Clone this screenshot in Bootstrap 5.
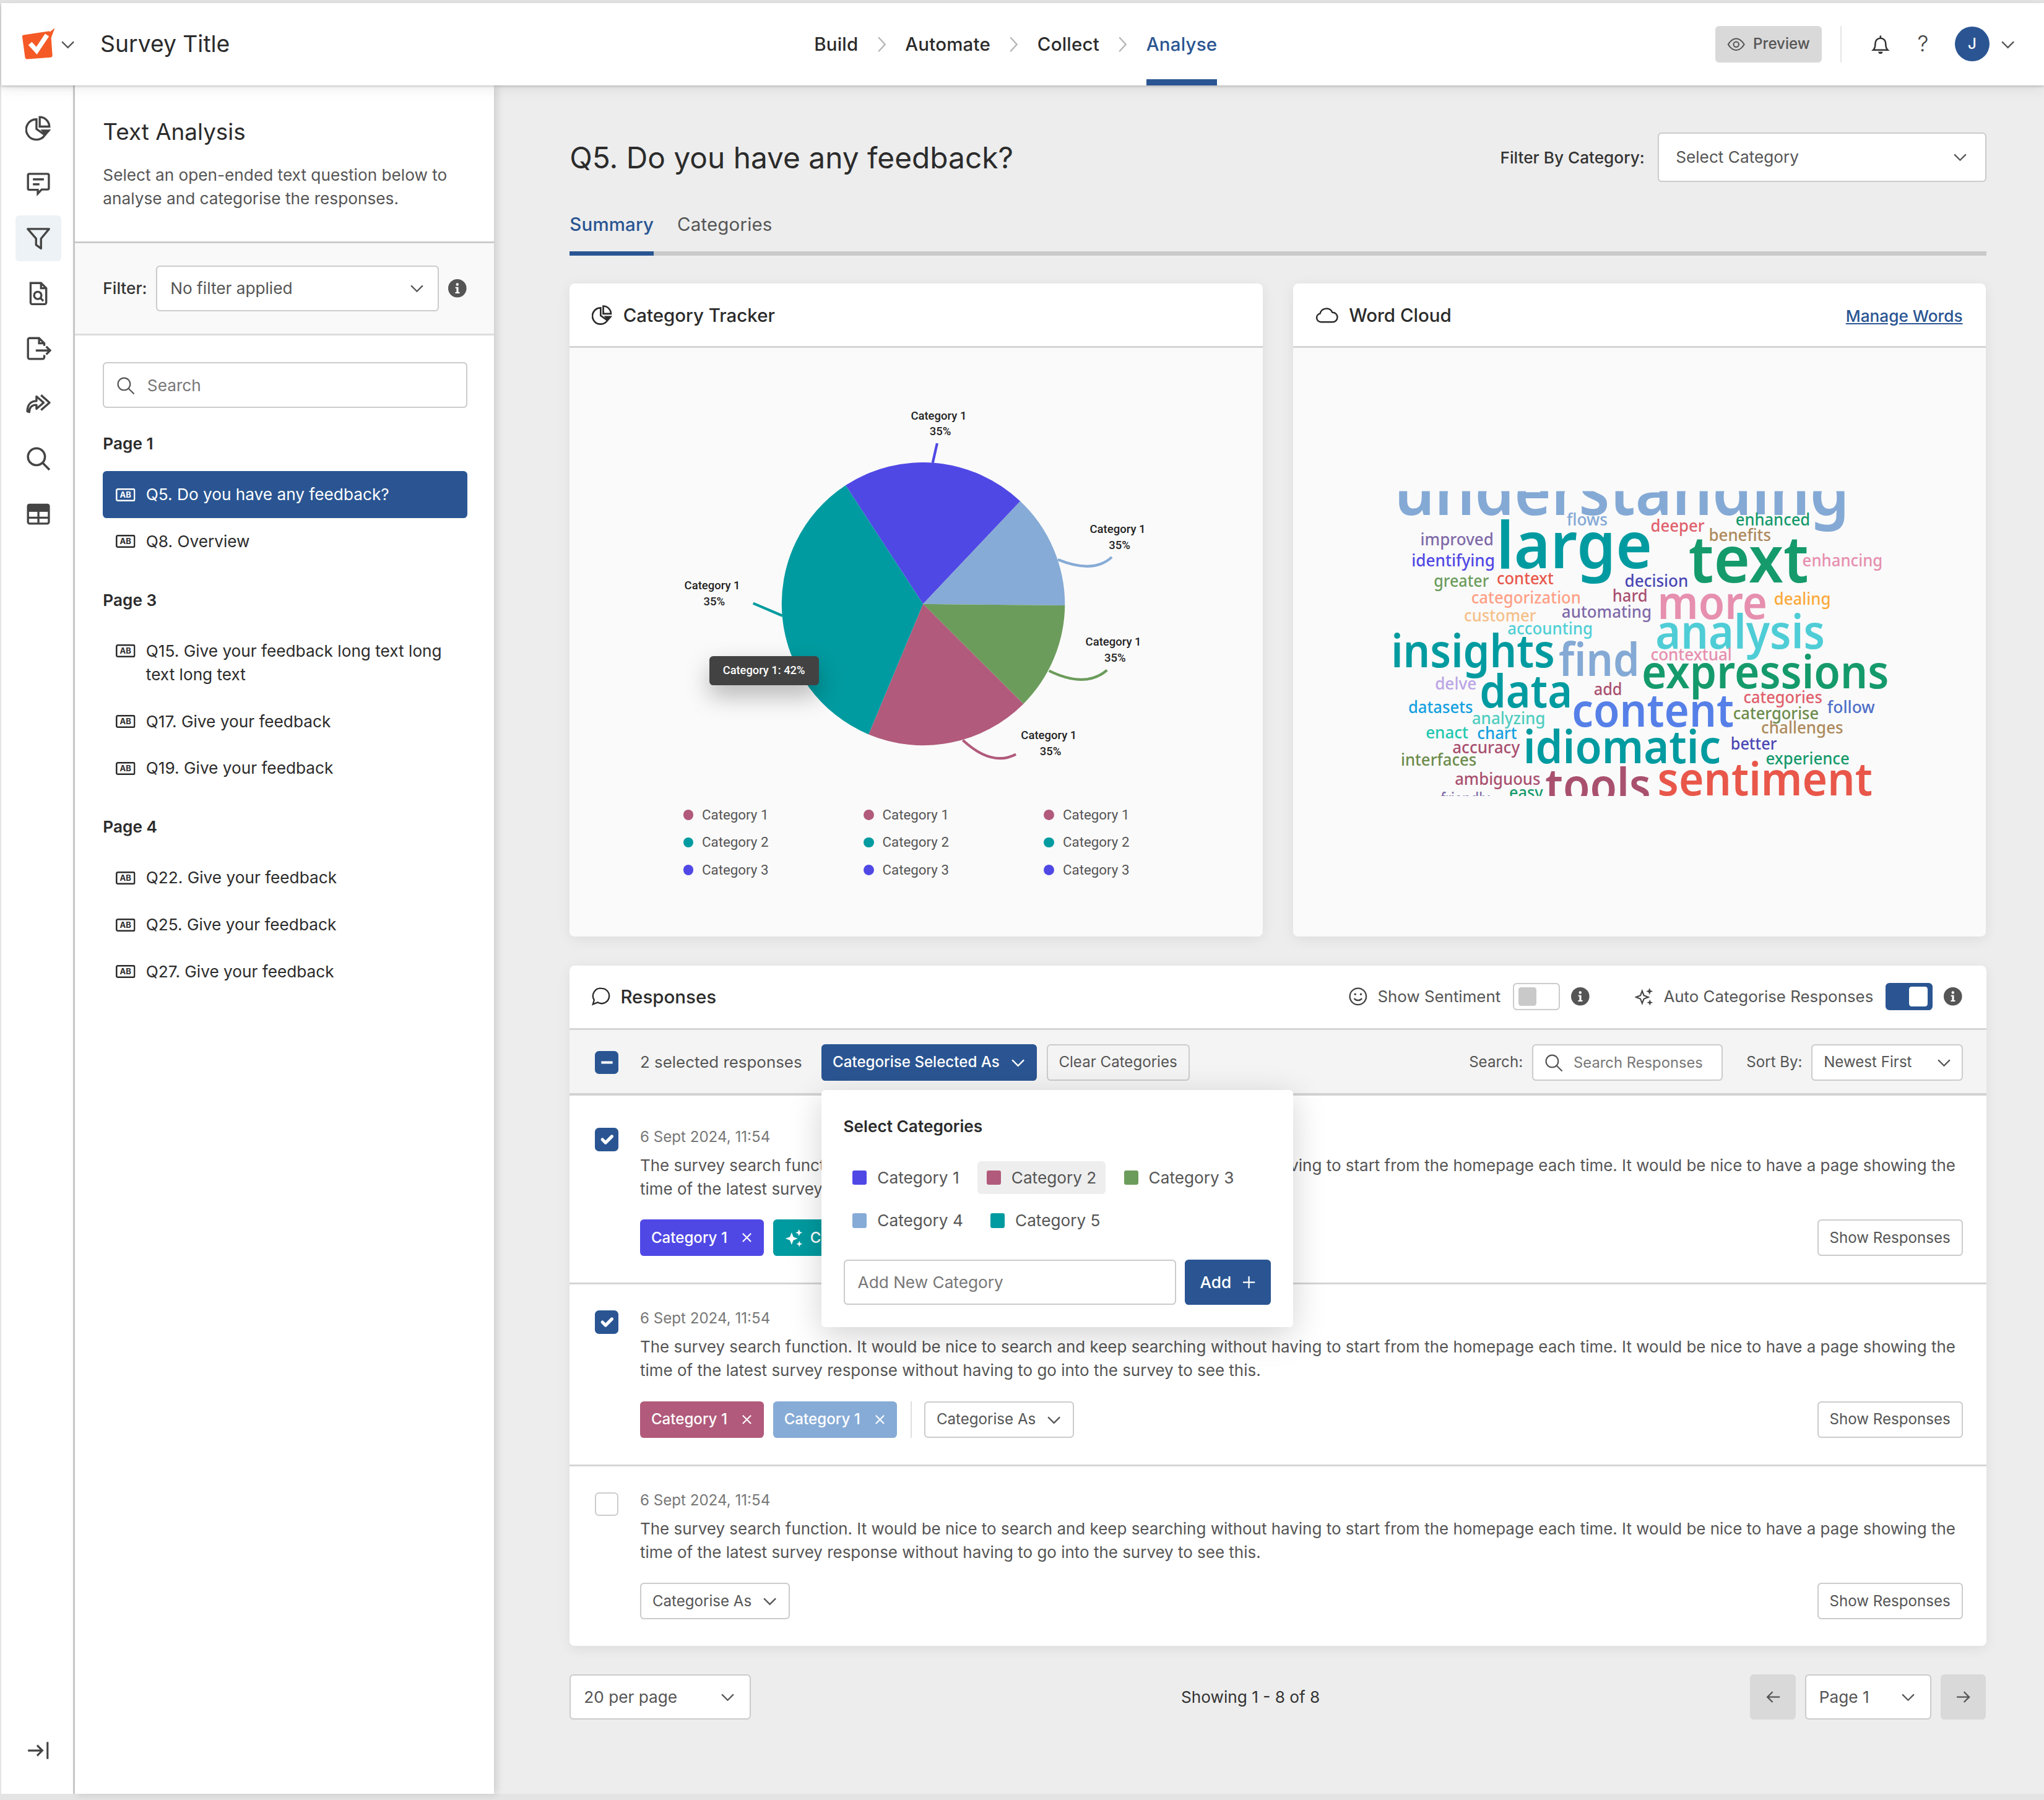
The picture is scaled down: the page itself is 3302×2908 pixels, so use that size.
<!DOCTYPE html>
<html lang="en">
<head>
<meta charset="utf-8">
<title>Survey Title - Text Analysis</title>
<link rel="stylesheet" href="https://cdn.jsdelivr.net/npm/bootstrap@5.3.0/dist/css/bootstrap.min.css">
<style>
html{background:#e4e4e4;overflow:hidden}
body{zoom:2.106;background:#e4e4e4;font-family:Inter,"Liberation Sans",sans-serif;color:#2b2b2b;font-size:12.45px;overflow:hidden}
.app-shell{width:1568px;height:1381px;padding:2.4px 0 5px 1px}
.top-bar{height:63px;background:#fff;box-shadow:0 1px 2px rgba(0,0,0,.22),0 3px 10px rgba(0,0,0,.07);z-index:5;position:relative}
.brand-area{width:623.5px;padding-left:16px}
.brand-title{font-size:17.7px;margin-left:19px}
.step-link{font-size:14px;font-weight:500;letter-spacing:.1px;color:#2b2b2b;text-decoration:none;height:63px;line-height:63px;border-bottom:5px solid transparent;display:block}
.step-link.on{color:#2a5592;border-bottom-color:#2a5592}
.step-sep{width:36px;display:flex;justify-content:center;color:#b5b5b5}
.bar-right{margin-left:auto;padding-right:22px}
.preview-btn{height:28px;width:82px;background:#d9d9d9;border:0;border-radius:3px;font-size:11.45px;font-weight:500;color:#555;padding:0;gap:6px}
.bar-rule{width:1px;height:28px;background:#e6e6e6;margin:0 14px}
.avatar-dot{width:26.5px;height:26.5px;border-radius:50%;background:#2a5592;color:#fff;font-size:11.45px;font-weight:500}
.help-mark{font-size:17px;font-weight:300;color:#444;width:33px;text-align:center;line-height:1}
.body-row{height:1310.6px;min-height:0}
.icon-rail{width:56.5px;background:#fff;border-right:1.5px solid #ccc;padding:15.2px 0 15.5px;box-shadow:inset 0 6px 6px -6px rgba(0,0,0,.1)}
.rail-slot{width:35px;height:35px;border-radius:3px;margin:0 9px 7.3px 11px;color:#444}
.rail-slot.on{background:#edf2f6}
.side-panel{width:321.5px;background:#fff;box-shadow:2px 0 6px rgba(0,0,0,.14);z-index:3}
.panel-head{padding:23.7px 20.5px 23.5px 21.5px;border-bottom:1.5px solid #ccc}
.panel-title{font-size:17.5px;line-height:24px;margin:0 0 12.5px;font-weight:400}
.panel-copy{line-height:18px;color:#555;margin:0}
.filter-band{height:71px;background:#f9f9f9;border-bottom:1.5px solid #ddd;padding:0 20.5px 0 21.5px;gap:7px}
.strong-label{font-weight:500;color:#333;margin:0}
.fld{height:35px;font-size:12.45px;color:#555;border:1px solid #ccc;border-radius:3px;padding:0 28px 0 10px;background-color:#fff;box-shadow:none;
 background-image:url("data:image/svg+xml,%3csvg xmlns='http://www.w3.org/2000/svg' viewBox='0 0 12 12'%3e%3cpath fill='none' stroke='%23555' stroke-width='1.1' d='M1.5 4l4.5 4.5L10.5 4'/%3e%3c/svg%3e");background-size:12px 12px;background-position:right 11px center}
.fld-filter{background-position:right 9.5px center}
.fld-sm{height:28px;font-size:11.45px;padding-left:8.5px}
.fld-wide{width:252px;height:38px;padding-left:13px;background-position:right 13px center}
.fld-sort{width:116px;background-position:right 7.5px center}
.fld-perpage{width:139px}
.fld-page{width:97px}
.search-shell{height:35px;border:1px solid #ccc;border-radius:3px;background:#fff;padding-left:9px;gap:9px;color:#555}
.search-shell input{border:0;outline:0;padding:0;min-width:0;flex:1;font-size:12.45px;background:transparent}
.search-shell input::placeholder,.plain-input::placeholder{color:#777;opacity:1}
.panel-list{padding:20.5px 20.5px 0 21.5px}
.group-label{font-weight:600;line-height:18px;margin:18px 0 12px;color:#2b2b2b}
.group-label.lead-group{margin-top:18.5px}
.q-item{padding:9px 10px 9px 10px;line-height:18px;color:#2b2b2b;gap:8px;border-radius:3px;text-decoration:none}
.q-item svg{flex:none;margin-top:4px}
.q-item.on{background:#2a5592;color:#fff}
.main-area{padding:36px 44.5px 0 58px;background:#ededed;min-width:0}
.page-title{font-size:22.7px;line-height:39px;font-weight:400;margin:0 0 -1px}
.head-filter{margin-right:10px;margin-top:1px}
.tab-strip{margin-top:22.3px;border-bottom:3.4px solid #c9c9c9;gap:18px}
.tab-link{font-size:14px;line-height:20px;padding-bottom:11px;margin-bottom:-3.4px;border-bottom:3.4px solid transparent;color:#555;text-decoration:none;letter-spacing:.08px}
.tab-link.on{font-weight:500;color:#2a5592;border-bottom-color:#2a5592}
.top-cards{--bs-gutter-x:23px;margin-top:21.6px}
.soft-card{border:0;border-radius:4px;box-shadow:0 2px 10px rgba(0,0,0,.07);overflow:visible}
.soft-head{height:49.5px;background:#fff;border-bottom:1.5px solid #d5d5d5;padding:0 18px 0 17px;font-size:14px;font-weight:500;gap:8px;border-radius:4px 4px 0 0}
.resp-head{padding-left:16px;gap:7px}
.viz-body{height:451.5px;background:#fafafa;padding:0;border-radius:0 0 4px 4px}
.manage-link{font-size:12.45px;font-weight:500;color:#2a5592;margin:2px 0 0 auto}
.chart-canvas{display:block;width:532px;height:347.5px}
.chart-label{font-family:Roboto,sans-serif;font-size:8.8px;font-weight:500;fill:#222;text-anchor:middle}
.tip-box{top:236.5px;left:107px;width:84px;height:22px;background:#424242;color:#fff;border-radius:3px;font:500 8.7px/22px Roboto,sans-serif;text-align:center;box-shadow:0 8px 18px rgba(0,0,0,.28)}
.legend-grid{display:grid;grid-template-columns:repeat(3,138.4px);margin-left:87px;font-family:Roboto,sans-serif;font-size:10.6px;color:#555;line-height:21px}
.legend-dot{width:8px;height:8px;border-radius:50%;margin-right:6.5px;display:inline-block;vertical-align:-0.5px}
.cloud-canvas{display:block;width:532px;height:451.5px}
.cloud-canvas text{font-family:"Noto Sans",sans-serif;font-weight:500}
.cloud-canvas text.hv{font-weight:600}
.bg-c1{background:#5048e5}.bg-c2{background:#b15a7b}.bg-c3{background:#6c9c5c}.bg-c4{background:#86abd6}.bg-c5{background:#009ba0}
.resp-card{margin-top:22px}
.opt-strip{font-size:12.3px;font-weight:400}
.opt-label{color:#555;margin:0}
.gap-7{margin-left:7px}.gap-9{margin-left:9.5px}.gap-34{margin-left:34.5px}
.tg-box{width:36px;height:21px;border:1px solid #ccc;border-radius:3px;background:#fff;padding:0 3px}
.tg-knob{width:14px;height:14px;border-radius:2px;background:#c9c9c9}
.tg-box.on{background:#2a5592;border-color:#2a5592;justify-content:flex-end}
.tg-box.on .tg-knob{background:#fff;height:15px;width:14px}
.tool-band{height:50.5px;background:#f4f4f4;border-bottom:2px solid #d2d2d2;padding:1.5px 18px 0 19.5px;color:#555}
.chk{width:18px;height:18px;margin:0;border-radius:3px;border:1px solid #ccc;flex:none;background-color:#fff;box-shadow:none}
.chk:checked{background-color:#2a5592;border-color:#2a5592}
.chk.chk-mixed:checked[type=checkbox]{--bs-form-check-bg-image:url("data:image/svg+xml,%3csvg xmlns='http://www.w3.org/2000/svg' viewBox='0 0 18 18'%3e%3cpath stroke='%23fff' stroke-width='2.2' d='M4 9h10'/%3e%3c/svg%3e")}
.sel-count{margin:0 15px 0 16.5px;font-size:12.3px}
.act-btn{height:28px;font-size:11.45px;padding:0 8.5px;border-radius:3px;white-space:nowrap}
.act-primary{background:#2a5592;color:#fff;border:0;font-weight:500}
.act-outline{background:#fff;border:1px solid #ccc;color:#555}
.act-ghost{background:transparent;border:1px solid #ccc;color:#555;margin-left:7.5px}
.mini-label{font-size:11.45px;color:#555;margin:0}
.search-lbl{margin:0 7px 0 auto}
.sort-lbl{margin:0 7px 0 18px}
.mini-search{height:28px;width:146.5px;flex:none;padding-left:8px;gap:8px}
.mini-search input{font-size:11.3px}
.resp-row{padding:17px 18px 20.5px 19.5px;border-bottom:1.5px solid #d5d5d5;background:#fff}
.resp-row.first{padding-top:22.5px}
.resp-row.first .resp-check{padding-top:2px}
.resp-row.last{border-bottom:0;border-radius:0 0 4px 4px;padding-bottom:20.5px}
.resp-check{margin-right:16.5px;padding-top:3px}
.resp-date{font-size:11.45px;line-height:18px;color:#777}
.resp-copy{font-size:12.33px;line-height:18px;color:#555;margin:4px 0 14.5px}
.chip-line{gap:7px}
.chip-tag{height:28px;padding:0 8.5px;width:95px;border-radius:3px;color:#fff;font-size:11.45px;font-weight:500;justify-content:space-between;white-space:nowrap;overflow:hidden}
.chip-tag svg{flex:none}
.chip-auto{justify-content:flex-start;gap:5px}
.chip-rule{width:1px;height:28px;background:#e0e0e0;margin:0 2.5px 0 3.5px}
.cat-pop{top:95.6px;left:193px;width:362px;height:182px;background:#fff;border-radius:3px;box-shadow:0 6px 26px rgba(0,0,0,.18);padding:18px 17px 17px;z-index:4}
.pop-title{font-weight:600;color:#2b2b2b;line-height:20px;margin:0 0 16.5px}
.pop-items{column-gap:7px;row-gap:7.5px;margin-bottom:17px}
.pop-item{height:25.5px;padding:0 7px;border-radius:3px;color:#555;gap:8px}
.pop-item.hov{background:#eee}
.swatch{width:11px;height:11px;border-radius:1.5px;flex:none}
.plain-input{height:35px;width:255px;font-size:12.45px;border:1px solid #ccc;border-radius:3px;padding:0 10px;box-shadow:none}
.add-btn{height:35px;width:66px;margin-left:7px;background:#2a5592;color:#fff;border:0;border-radius:3px;font-size:12.45px;font-weight:500;padding:0;gap:8px}
.page-foot{margin-top:21.5px;color:#333}
.pager-group{gap:7px}
.square-btn{width:35px;height:35px;background:#d9d9d9;border:0;border-radius:3px;padding:0;color:#555}
.ico-muted{color:#555}
.ico-dark{color:#444}
</style>
</head>
<body>
<svg class="d-none" xmlns="http://www.w3.org/2000/svg">
 <symbol id="i-chev" viewBox="0 0 12 12"><path fill="none" stroke="currentColor" stroke-width="1.1" d="M1.5 4L6 8.5 10.5 4"/></symbol>
 <symbol id="i-sep" viewBox="0 0 8 14"><path fill="none" stroke="currentColor" stroke-width="1.1" d="M1.5 1.5L6.5 7l-5 5.5"/></symbol>
 <symbol id="i-info" viewBox="0 0 16 16"><circle cx="8" cy="8" r="7.5" fill="#555"/><path fill="#fff" d="M6.4 7h2.5v4.2h1v1H6.3v-1h1V8H6.4z"/><circle cx="8" cy="4.8" r="1.1" fill="#fff"/></symbol>
 <symbol id="i-search" viewBox="0 0 16 16"><g fill="none" stroke="currentColor" stroke-width="1.1"><circle cx="6.8" cy="6.8" r="5"/><path d="M10.4 10.4L15 15"/></g></symbol>
 <symbol id="i-ab" viewBox="0 0 15 10"><rect x=".6" y=".6" width="13.8" height="8.8" rx="1" fill="none" stroke="currentColor" stroke-width="1.2"/><text x="7.5" y="7.3" font-family="Inter,sans-serif" font-size="6.2" font-weight="700" text-anchor="middle" fill="currentColor">AB</text></symbol>
 <symbol id="i-pie" viewBox="0 0 20 20"><g fill="none" stroke="currentColor" stroke-width="1.6"><path d="M8.5 3.2A7.8 7.8 0 1 0 15 15.2L8.5 10.6z"/><path d="M11 1.5a7.5 7.5 0 0 1 7.4 7.3H11z"/></g><path fill="currentColor" d="M11.5 11h8.2l-4.1 4.8z"/></symbol>
 <symbol id="i-chat" viewBox="0 0 20 20"><g fill="none" stroke="currentColor" stroke-width="1.6"><path d="M3 2.8h14a1 1 0 0 1 1 1v10a1 1 0 0 1-1 1h-4.5L9.5 18v-3H3a1 1 0 0 1-1-1v-10a1 1 0 0 1 1-1.2z"/><path d="M5.8 7h8.4M5.8 10.8h5"/></g></symbol>
 <symbol id="i-funnel" viewBox="0 0 20 20"><path fill="none" stroke="currentColor" stroke-width="1.6" stroke-linejoin="round" d="M1.8 2.8h16.4L12 10.2v7.6L8.2 15v-4.8z"/></symbol>
 <symbol id="i-docsearch" viewBox="0 0 20 20"><g fill="none" stroke="currentColor" stroke-width="1.6"><path d="M4 2h8l4 4v11a1.2 1.2 0 0 1-1.2 1.2H5.200A1.200 1.200 0 0 1 4 17z"/><path d="M12 2v4h4"/><circle cx="9.500" cy="11.500" r="2.800"/><path d="M11.500 13.500l2.300 2.300"/></g></symbol>
 <symbol id="i-export" viewBox="0 0 20 20"><g fill="none" stroke="currentColor" stroke-width="1.6"><path d="M14.500 8V6l-4-4H3.200A1.200 1.200 0 0 0 2 3.200v13.600A1.200 1.200 0 0 0 3.200 18h10.100a1.200 1.200 0 0 0 1.200-1.200V15"/><path d="M10.500 2v4h4"/><path d="M8 11.500h11M16 8.500l3 3-3 3"/></g></symbol>
 <symbol id="i-share" viewBox="0 0 20 20"><g fill="none" stroke="currentColor" stroke-width="1.6" stroke-linejoin="round"><path d="M1.500 16.500c0-5 2.500-8 7-8V5l5.500 4.800-5.500 4.700v-3c-3 0-5.500 1.500-5.500 5.500z" transform="translate(0 -.5)"/><path d="M12 3.500l6.500 5.800-6.500 5.700"/></g></symbol>
 <symbol id="i-lens" viewBox="0 0 20 20"><g fill="none" stroke="currentColor" stroke-width="1.700"><circle cx="8.500" cy="8.500" r="6.500"/><path d="M13.200 13.200L18.500 18.500"/></g></symbol>
 <symbol id="i-table" viewBox="0 0 20 20"><rect x="2" y="3" width="16" height="14.500" rx="1.200" fill="none" stroke="currentColor" stroke-width="1.600"/><rect x="2" y="3" width="16" height="5.500" fill="currentColor"/><path stroke="currentColor" stroke-width="1.600" d="M2 13h16M10 8v9"/></symbol>
 <symbol id="i-collapse" viewBox="0 0 20 20"><g fill="none" stroke="currentColor" stroke-width="1.500"><path d="M2 10h11M9 6l4 4-4 4M17 3.500v13"/></g></symbol>
 <symbol id="i-eye" viewBox="0 0 16 16"><g fill="none" stroke="currentColor" stroke-width="1.100"><path d="M1 8s2.700-5 7-5 7 5 7 5-2.700 5-7 5-7-5-7-5z"/><circle cx="8" cy="8" r="2.300"/></g></symbol>
 <symbol id="i-bell" viewBox="0 0 16 16"><g fill="none" stroke="#333" stroke-width="1.200"><path d="M2.500 12.200c1.200-1.100 1.500-2.200 1.500-5 0-2.400 1.700-4 4-4s4 1.600 4 4c0 2.800.3 3.900 1.500 5z"/><path d="M8 1.200v2"/></g><path fill="#333" d="M6.300 13.500h3.400a1.700 1.700 0 0 1-3.400 0z"/></symbol>
 <symbol id="i-cloud" viewBox="0 0 20 20"><path fill="none" stroke="currentColor" stroke-width="1.300" d="M5.200 16a3.700 3.700 0 0 1-.7-7.300A5.600 5.600 0 0 1 15 7.800a4.100 4.100 0 0 1 .3 8.200z"/></symbol>
 <symbol id="i-bubble" viewBox="0 0 16 16"><path fill="none" stroke="currentColor" stroke-width="1.100" d="M8.500 1.800a5.800 5.800 0 1 1-3.100 10.700L1.800 14l1-3.300A5.800 5.800 0 0 1 8.500 1.800z"/></symbol>
 <symbol id="i-smile" viewBox="0 0 16 16"><g fill="none" stroke="currentColor" stroke-width="1.100"><circle cx="8" cy="8" r="6.300"/><path d="M5 9.500c1.500 2 4.500 2 6 0"/></g><circle cx="5.800" cy="6.300" r=".8" fill="currentColor"/><circle cx="10.200" cy="6.300" r=".8" fill="currentColor"/></symbol>
 <symbol id="i-spark" viewBox="0 0 16 16"><path fill="none" stroke="currentColor" stroke-width="1.100" d="M6 3.500l1.400 3.700L11 8.600 7.400 10 6 13.700 4.600 10 1 8.600l3.600-1.400z"/><path fill="currentColor" d="M12 1l.8 2 2 .8-2 .8-.8 2-.8-2-2-.8 2-.8zM12.300 10.500l.7 1.800 1.800.7-1.800.7-.7 1.800-.7-1.800-1.800-.7 1.800-.7z"/></symbol>
 <symbol id="i-spark-solid" viewBox="0 0 16 16"><path fill="currentColor" d="M6 3.500l1.400 3.700L11 8.600 7.400 10 6 13.700 4.600 10 1 8.600l3.600-1.400zM12 1l.8 2 2 .8-2 .8-.8 2-.8-2-2-.8 2-.8zM12.300 10.500l.7 1.800 1.800.7-1.800.7-.7 1.800-.7-1.800-1.800-.7 1.800-.7z"/></symbol>
 <symbol id="i-x" viewBox="0 0 10 10"><path fill="none" stroke="currentColor" stroke-width="1.100" d="M1.500 1.500l7 7M8.500 1.500l-7 7"/></symbol>
 <symbol id="i-plus" viewBox="0 0 12 12"><path fill="none" stroke="currentColor" stroke-width="1.200" d="M6 1v10M1 6h10"/></symbol>
 <symbol id="i-left" viewBox="0 0 12 12"><path fill="none" stroke="currentColor" stroke-width="1.100" d="M11 6H1.500M5.500 2L1.500 6l4 4"/></symbol>
 <symbol id="i-right" viewBox="0 0 12 12"><path fill="none" stroke="currentColor" stroke-width="1.100" d="M1 6h9.500M6.500 2l4 4-4 4"/></symbol>
</svg>

<div class="app-shell d-flex flex-column">
 <header class="top-bar d-flex align-items-center flex-none">
  <div class="brand-area d-flex align-items-center">
   <svg width="25" height="25" viewBox="0 0 25 25"><path fill="#f55a26" d="M1 5.500 20 2.600q1.800-.3 1.900 1.500l1.200 16.800q.1 1.600-1.500 1.800L4 24q-1.700.1-1.900-1.600L0 7q-.2-1.300 1-1.500z"/><path fill="none" stroke="#fff" stroke-width="3.600" d="M6 12l5 5.500 8-12"/><path fill="#f55a26" d="M19.500 4.500 25 0l-3 8z"/></svg>
   <svg class="ms-1 ico-muted" width="12" height="12"><use href="#i-chev"/></svg>
   <span class="brand-title">Survey Title</span>
  </div>
  <nav class="d-flex align-items-center">
   <a class="step-link" href="#">Build</a>
   <span class="step-sep"><svg width="8" height="14"><use href="#i-sep"/></svg></span>
   <a class="step-link" href="#">Automate</a>
   <span class="step-sep"><svg width="8" height="14"><use href="#i-sep"/></svg></span>
   <a class="step-link" href="#">Collect</a>
   <span class="step-sep"><svg width="8" height="14"><use href="#i-sep"/></svg></span>
   <a class="step-link on" href="#">Analyse</a>
  </nav>
  <div class="bar-right d-flex align-items-center">
   <button class="btn preview-btn d-flex align-items-center justify-content-center" type="button"><svg width="14" height="14"><use href="#i-eye"/></svg>Preview</button>
   <span class="bar-rule"></span>
   <svg class="mx-2" width="16" height="16"><use href="#i-bell"/></svg>
   <span class="help-mark">?</span>
   <span class="avatar-dot d-flex align-items-center justify-content-center ms-2">J</span>
   <svg class="ms-2 ico-muted" width="12" height="12"><use href="#i-chev"/></svg>
  </div>
 </header>

 <div class="body-row d-flex">
  <aside class="icon-rail d-flex flex-column flex-shrink-0">
   <div class="rail-slot d-flex align-items-center justify-content-center"><svg width="20" height="20"><use href="#i-pie"/></svg></div>
   <div class="rail-slot d-flex align-items-center justify-content-center"><svg width="20" height="20"><use href="#i-chat"/></svg></div>
   <div class="rail-slot on d-flex align-items-center justify-content-center"><svg width="20" height="20"><use href="#i-funnel"/></svg></div>
   <div class="rail-slot d-flex align-items-center justify-content-center"><svg width="20" height="20"><use href="#i-docsearch"/></svg></div>
   <div class="rail-slot d-flex align-items-center justify-content-center"><svg width="20" height="20"><use href="#i-export"/></svg></div>
   <div class="rail-slot d-flex align-items-center justify-content-center"><svg width="20" height="20"><use href="#i-share"/></svg></div>
   <div class="rail-slot d-flex align-items-center justify-content-center"><svg width="20" height="20"><use href="#i-lens"/></svg></div>
   <div class="rail-slot d-flex align-items-center justify-content-center"><svg width="20" height="20"><use href="#i-table"/></svg></div>
   <div class="rail-slot d-flex align-items-center justify-content-center mt-auto mb-0"><svg width="20" height="20"><use href="#i-collapse"/></svg></div>
  </aside>

  <aside class="side-panel flex-shrink-0">
   <div class="panel-head">
    <h2 class="panel-title">Text Analysis</h2>
    <p class="panel-copy">Select an open-ended text question below to analyse and categorise the responses.</p>
   </div>
   <div class="filter-band d-flex align-items-center">
    <label class="strong-label">Filter:</label>
    <select class="form-select fld fld-filter flex-grow-1"><option>No filter applied</option></select>
    <svg width="15" height="15" class="flex-shrink-0"><use href="#i-info"/></svg>
   </div>
   <div class="panel-list">
    <div class="search-shell d-flex align-items-center"><svg width="15" height="15"><use href="#i-search"/></svg><input type="text" placeholder="Search"></div>
    <div class="group-label lead-group">Page 1</div>
    <a class="q-item on d-flex" href="#"><svg width="15" height="10"><use href="#i-ab"/></svg><span>Q5. Do you have any feedback?</span></a>
    <a class="q-item d-flex" href="#"><svg width="15" height="10"><use href="#i-ab"/></svg><span>Q8. Overview</span></a>
    <div class="group-label">Page 3</div>
    <a class="q-item d-flex" href="#"><svg width="15" height="10"><use href="#i-ab"/></svg><span>Q15. Give your feedback long text long text long text</span></a>
    <a class="q-item d-flex" href="#"><svg width="15" height="10"><use href="#i-ab"/></svg><span>Q17. Give your feedback</span></a>
    <a class="q-item d-flex" href="#"><svg width="15" height="10"><use href="#i-ab"/></svg><span>Q19. Give your feedback</span></a>
    <div class="group-label">Page 4</div>
    <a class="q-item d-flex" href="#"><svg width="15" height="10"><use href="#i-ab"/></svg><span>Q22. Give your feedback</span></a>
    <a class="q-item d-flex" href="#"><svg width="15" height="10"><use href="#i-ab"/></svg><span>Q25. Give your feedback</span></a>
    <a class="q-item d-flex" href="#"><svg width="15" height="10"><use href="#i-ab"/></svg><span>Q27. Give your feedback</span></a>
   </div>
  </aside>

  <main class="main-area flex-grow-1">
   <div class="d-flex align-items-center">
    <h1 class="page-title">Q5. Do you have any feedback?</h1>
    <label class="strong-label ms-auto head-filter">Filter By Category:</label>
    <select class="form-select fld fld-wide"><option>Select Category</option></select>
   </div>
   <div class="tab-strip d-flex">
    <a class="tab-link on" href="#">Summary</a>
    <a class="tab-link" href="#">Categories</a>
   </div>

   <div class="row top-cards">
    <div class="col-6">
     <section class="card soft-card">
      <div class="card-header soft-head d-flex align-items-center"><svg width="16" height="16"><use href="#i-pie"/></svg>Category Tracker</div>
      <div class="card-body viz-body position-relative">
       <svg class="chart-canvas" viewBox="0 .5 532 347.500">
        <path fill="#5048e5" d="M271.200 197L211.800 105.900A108.700 108.700 0 0 1 345.800 118.200Z"/>
        <path fill="#86abd6" d="M271.200 197L345.800 118.200A108.700 108.700 0 0 1 380 198Z"/>
        <path fill="#6c9c5c" d="M271.200 197L380 198A108.700 108.700 0 0 1 348.200 273.600Z"/>
        <path fill="#b15a7b" d="M271.200 197L348.200 273.600A108.700 108.700 0 0 1 229.400 297Z"/>
        <path fill="#009ba0" d="M271.200 197L229.400 297A108.700 108.700 0 0 1 211.800 105.900Z"/>
        <g fill="none" stroke-width="2">
         <path stroke="#5048e5" d="M278.600 88.700L282 73.700"/>
         <path stroke="#86abd6" d="M374.600 162.900Q402 174 416 161"/>
         <path stroke="#6c9c5c" d="M367.800 248.200Q396 262 412.300 247.700"/>
         <path stroke="#b15a7b" d="M301.700 301.400Q324 322 342.400 312.300"/>
         <path stroke="#009ba0" d="M163.300 206L140.900 196.400"/>
        </g>
        <text class="chart-label" x="283.200" y="55.500">Category 1</text><text class="chart-label" x="284.500" y="67.500">35%</text>
        <text class="chart-label" x="420.500" y="142.500">Category 1</text><text class="chart-label" x="421.900" y="154.900">35%</text>
        <text class="chart-label" x="417.200" y="229.100">Category 1</text><text class="chart-label" x="418.500" y="241.300">35%</text>
        <text class="chart-label" x="367.700" y="300.500">Category 1</text><text class="chart-label" x="369" y="312.800">35%</text>
        <text class="chart-label" x="109.500" y="185.700">Category 1</text><text class="chart-label" x="111" y="198">35%</text>
       </svg>
       <div class="tip-box position-absolute">Category 1: 42%</div>
       <div class="legend-grid">
        <div><span class="legend-dot bg-c2"></span>Category 1</div><div><span class="legend-dot bg-c2"></span>Category 1</div><div><span class="legend-dot bg-c2"></span>Category 1</div>
        <div><span class="legend-dot bg-c5"></span>Category 2</div><div><span class="legend-dot bg-c5"></span>Category 2</div><div><span class="legend-dot bg-c5"></span>Category 2</div>
        <div><span class="legend-dot bg-c1"></span>Category 3</div><div><span class="legend-dot bg-c1"></span>Category 3</div><div><span class="legend-dot bg-c1"></span>Category 3</div>
       </div>
      </div>
     </section>
    </div>
    <div class="col-6">
     <section class="card soft-card">
      <div class="card-header soft-head d-flex align-items-center"><svg width="18" height="18"><use href="#i-cloud"/></svg>Word Cloud<a class="manage-link" href="#">Manage Words</a></div>
      <div class="card-body viz-body">
       <svg class="cloud-canvas" viewBox="0 -.5 532 451.500">
        <defs><clipPath id="cloud-clip"><rect x="60" y="109.400" width="420" height="233.900"/></clipPath></defs>
        <g clip-path="url(#cloud-clip)">
         <text class="hv" x="77.700" y="127.600" font-size="52" fill="#84a9d5" textLength="349" lengthAdjust="spacingAndGlyphs">understanding</text>
         <text x="209.900" y="135.900" font-size="13" fill="#84a9d5" textLength="31.300" lengthAdjust="spacingAndGlyphs">flows</text>
         <text x="274.200" y="140.300" font-size="13" fill="#e0606c" textLength="41.400" lengthAdjust="spacingAndGlyphs">deeper</text>
         <text x="339.400" y="135.900" font-size="13" fill="#159a6c" textLength="57.200" lengthAdjust="spacingAndGlyphs">enhanced</text>
         <text x="318.900" y="147.700" font-size="13" fill="#ad8a5c" textLength="47.700" lengthAdjust="spacingAndGlyphs">benefits</text>
         <text x="97.600" y="151.200" font-size="13" fill="#7f6aa9" textLength="56.200" lengthAdjust="spacingAndGlyphs">improved</text>
         <text class="hv" x="155.900" y="168.700" font-size="50" fill="#009ba0" textLength="119.500" lengthAdjust="spacingAndGlyphs">large</text>
         <text class="hv" x="303.300" y="179.600" font-size="50" fill="#159a6c" textLength="92.100" lengthAdjust="spacingAndGlyphs">text</text>
         <text x="90.800" y="167" font-size="13" fill="#5048e5" textLength="64" lengthAdjust="spacingAndGlyphs">identifying</text>
         <text x="390.600" y="167" font-size="13" fill="#e68fae" textLength="61.600" lengthAdjust="spacingAndGlyphs">enhancing</text>
         <text x="107.900" y="182.800" font-size="13" fill="#6c9c5c" textLength="42.300" lengthAdjust="spacingAndGlyphs">greater</text>
         <text x="156.200" y="181" font-size="13" fill="#e8574a" textLength="43.600" lengthAdjust="spacingAndGlyphs">context</text>
         <text x="254.300" y="182.800" font-size="13" fill="#4a47b5" textLength="48.800" lengthAdjust="spacingAndGlyphs">decision</text>
         <text x="136.600" y="195.400" font-size="13" fill="#ff9f85" textLength="84.200" lengthAdjust="spacingAndGlyphs">categorization</text>
         <text x="244.900" y="194.400" font-size="13" fill="#a9506f" textLength="27" lengthAdjust="spacingAndGlyphs">hard</text>
         <text class="hv" x="279.500" y="207.400" font-size="35" fill="#e68fae" textLength="84.200" lengthAdjust="spacingAndGlyphs">more</text>
         <text x="368.800" y="196.500" font-size="13" fill="#fba93a" textLength="43.600" lengthAdjust="spacingAndGlyphs">dealing</text>
         <text x="206" y="206.500" font-size="13" fill="#7f6aa9" textLength="69" lengthAdjust="spacingAndGlyphs">automating</text>
         <text x="131.100" y="209.500" font-size="13" fill="#f5c08a" textLength="55.300" lengthAdjust="spacingAndGlyphs">customer</text>
         <text x="164.400" y="219.300" font-size="13" fill="#4fcfd6" textLength="65.400" lengthAdjust="spacingAndGlyphs">accounting</text>
         <text class="hv" x="277.900" y="230.200" font-size="36" fill="#4fcdd6" textLength="130" lengthAdjust="spacingAndGlyphs">analysis</text>
         <text class="hv" x="75.100" y="244.300" font-size="35" fill="#009ba0" textLength="125.700" lengthAdjust="spacingAndGlyphs">insights</text>
         <text class="hv" x="203.700" y="251" font-size="35" fill="#84a9d5" textLength="62" lengthAdjust="spacingAndGlyphs">find</text>
         <text x="274.200" y="239.400" font-size="13" fill="#e68fae" textLength="62.400" lengthAdjust="spacingAndGlyphs">contextual</text>
         <text class="hv" x="267.300" y="260.600" font-size="35" fill="#159a6c" textLength="189.700" lengthAdjust="spacingAndGlyphs">expressions</text>
         <text x="108.800" y="261.500" font-size="13" fill="#baa5e5" textLength="31.900" lengthAdjust="spacingAndGlyphs">delve</text>
         <text class="hv" x="143" y="275.600" font-size="35" fill="#009ba0" textLength="71.200" lengthAdjust="spacingAndGlyphs">data</text>
         <text x="230.600" y="265.700" font-size="13" fill="#a9506f" textLength="21.800" lengthAdjust="spacingAndGlyphs">add</text>
         <text class="hv" x="213.800" y="290.300" font-size="35" fill="#5680e8" textLength="124.300" lengthAdjust="spacingAndGlyphs">content</text>
         <text x="345.400" y="272" font-size="13" fill="#e0606c" textLength="60.500" lengthAdjust="spacingAndGlyphs">categories</text>
         <text x="88.300" y="279.800" font-size="13" fill="#15a0e0" textLength="49.600" lengthAdjust="spacingAndGlyphs">datasets</text>
         <text x="409.700" y="279.800" font-size="13" fill="#4f6fc8" textLength="36.500" lengthAdjust="spacingAndGlyphs">follow</text>
         <text x="337.500" y="284.300" font-size="13" fill="#6c8c4c" textLength="65.700" lengthAdjust="spacingAndGlyphs">catergorise</text>
         <text x="137.100" y="288.200" font-size="13" fill="#4fcdc0" textLength="56.400" lengthAdjust="spacingAndGlyphs">analyzing</text>
         <text x="359" y="295.200" font-size="13" fill="#ad8a5c" textLength="63" lengthAdjust="spacingAndGlyphs">challenges</text>
         <text x="101.700" y="299.100" font-size="13" fill="#22c8b0" textLength="32.700" lengthAdjust="spacingAndGlyphs">enact</text>
         <text x="141.200" y="299.800" font-size="13" fill="#15a0e0" textLength="30.500" lengthAdjust="spacingAndGlyphs">chart</text>
         <text class="hv" x="176.500" y="318.100" font-size="35" fill="#009ba0" textLength="151.600" lengthAdjust="spacingAndGlyphs">idiomatic</text>
         <text x="335.600" y="307.500" font-size="13" fill="#4a47b5" textLength="35.400" lengthAdjust="spacingAndGlyphs">better</text>
         <text x="122.100" y="310.700" font-size="13" fill="#a9506f" textLength="51.800" lengthAdjust="spacingAndGlyphs">accuracy</text>
         <text x="362.500" y="319" font-size="13" fill="#159a6c" textLength="64.300" lengthAdjust="spacingAndGlyphs">experience</text>
         <text x="82.600" y="319.800" font-size="13" fill="#6c8c4c" textLength="58.100" lengthAdjust="spacingAndGlyphs">interfaces</text>
         <text class="hv" x="279.500" y="342.700" font-size="35" fill="#e8574a" textLength="164.900" lengthAdjust="spacingAndGlyphs">sentiment</text>
         <text x="124" y="334.800" font-size="13" fill="#a9506f" textLength="65.700" lengthAdjust="spacingAndGlyphs">ambiguous</text>
         <text class="hv" x="193.400" y="347.900" font-size="36" fill="#a9506f" textLength="81" lengthAdjust="spacingAndGlyphs">tools</text>
         <text x="165.700" y="345.300" font-size="13" fill="#159a6c" textLength="25.900" lengthAdjust="spacingAndGlyphs">easy</text>
         <text x="113.100" y="350" font-size="13" fill="#7f6aa9" textLength="37.600" lengthAdjust="spacingAndGlyphs">friendly</text>
        </g>
       </svg>
      </div>
     </section>
    </div>
   </div>

   <section class="card soft-card resp-card position-relative">
    <div class="card-header soft-head resp-head d-flex align-items-center"><svg width="16" height="16"><use href="#i-bubble"/></svg>Responses
     <div class="ms-auto d-flex align-items-center opt-strip">
      <svg width="16" height="16" class="ico-dark"><use href="#i-smile"/></svg><span class="opt-label gap-7">Show Sentiment</span>
      <span class="tg-box d-flex align-items-center gap-9"><span class="tg-knob"></span></span>
      <svg width="15" height="15" class="ms-2"><use href="#i-info"/></svg>
      <svg width="15" height="15" class="gap-34 ico-dark"><use href="#i-spark"/></svg><span class="opt-label gap-7">Auto Categorise Responses</span>
      <span class="tg-box on d-flex align-items-center gap-9"><span class="tg-knob"></span></span>
      <svg width="15" height="15" class="ms-2"><use href="#i-info"/></svg>
     </div>
    </div>
    <div class="tool-band d-flex align-items-center">
     <input class="form-check-input chk chk-mixed" type="checkbox" checked aria-label="Select all">
     <span class="sel-count">2 selected responses</span>
     <button class="btn act-btn act-primary d-flex align-items-center" type="button">Categorise Selected As<svg width="12" height="12" class="ms-2"><use href="#i-chev"/></svg></button>
     <button class="btn act-btn act-ghost" type="button">Clear Categories</button>
     <label class="mini-label search-lbl">Search:</label>
     <div class="search-shell mini-search d-flex align-items-center"><svg width="15" height="15"><use href="#i-search"/></svg><input type="text" placeholder="Search Responses"></div>
     <label class="mini-label sort-lbl">Sort By:</label>
     <select class="form-select fld fld-sm fld-sort"><option>Newest First</option></select>
    </div>

    <div class="cat-pop position-absolute">
     <div class="pop-title">Select Categories</div>
     <div class="pop-items d-flex flex-wrap">
      <span class="pop-item d-flex align-items-center"><span class="swatch bg-c1"></span>Category 1</span>
      <span class="pop-item hov d-flex align-items-center"><span class="swatch bg-c2"></span>Category 2</span>
      <span class="pop-item d-flex align-items-center"><span class="swatch bg-c3"></span>Category 3</span>
      <span class="pop-item d-flex align-items-center"><span class="swatch bg-c4"></span>Category 4</span>
      <span class="pop-item d-flex align-items-center"><span class="swatch bg-c5"></span>Category 5</span>
     </div>
     <div class="d-flex">
      <input class="form-control plain-input" type="text" placeholder="Add New Category">
      <button class="btn add-btn d-flex align-items-center justify-content-center" type="button">Add<svg width="11" height="11"><use href="#i-plus"/></svg></button>
     </div>
    </div>

    <div class="resp-row first d-flex">
     <div class="resp-check"><input class="form-check-input chk" type="checkbox" checked aria-label="Select"></div>
     <div class="flex-grow-1">
      <div class="resp-date">6 Sept 2024, 11:54</div>
      <p class="resp-copy">The survey search function. It would be nice to search and keep searching without having to start from the homepage each time. It would be nice to have a page showing the time of the latest survey response without having to go into the survey to see this.</p>
      <div class="d-flex align-items-center chip-line">
       <span class="chip-tag bg-c1 d-flex align-items-center">Category 1<svg width="9" height="9"><use href="#i-x"/></svg></span>
       <span class="chip-tag chip-auto bg-c5 d-flex align-items-center"><svg width="15" height="15"><use href="#i-spark-solid"/></svg>Category 2</span>
       <button class="btn act-btn act-outline ms-auto" type="button">Show Responses</button>
      </div>
     </div>
    </div>
    <div class="resp-row d-flex">
     <div class="resp-check"><input class="form-check-input chk" type="checkbox" checked aria-label="Select"></div>
     <div class="flex-grow-1">
      <div class="resp-date">6 Sept 2024, 11:54</div>
      <p class="resp-copy">The survey search function. It would be nice to search and keep searching without having to start from the homepage each time. It would be nice to have a page showing the time of the latest survey response without having to go into the survey to see this.</p>
      <div class="d-flex align-items-center chip-line">
       <span class="chip-tag bg-c2 d-flex align-items-center">Category 1<svg width="9" height="9"><use href="#i-x"/></svg></span>
       <span class="chip-tag bg-c4 d-flex align-items-center">Category 1<svg width="9" height="9"><use href="#i-x"/></svg></span>
       <span class="chip-rule"></span>
       <button class="btn act-btn act-outline d-flex align-items-center" type="button">Categorise As<svg width="12" height="12" class="ms-2"><use href="#i-chev"/></svg></button>
       <button class="btn act-btn act-outline ms-auto" type="button">Show Responses</button>
      </div>
     </div>
    </div>
    <div class="resp-row last d-flex">
     <div class="resp-check"><input class="form-check-input chk" type="checkbox" aria-label="Select"></div>
     <div class="flex-grow-1">
      <div class="resp-date">6 Sept 2024, 11:54</div>
      <p class="resp-copy">The survey search function. It would be nice to search and keep searching without having to start from the homepage each time. It would be nice to have a page showing the time of the latest survey response without having to go into the survey to see this.</p>
      <div class="d-flex align-items-center chip-line">
       <button class="btn act-btn act-outline d-flex align-items-center" type="button">Categorise As<svg width="12" height="12" class="ms-2"><use href="#i-chev"/></svg></button>
       <button class="btn act-btn act-outline ms-auto" type="button">Show Responses</button>
      </div>
     </div>
    </div>
   </section>

   <div class="page-foot d-flex align-items-center justify-content-between">
    <select class="form-select fld fld-perpage"><option>20 per page</option></select>
    <span>Showing 1 - 8 of 8</span>
    <div class="d-flex align-items-center pager-group">
     <button class="btn square-btn d-flex align-items-center justify-content-center" type="button" aria-label="Previous"><svg width="12" height="12"><use href="#i-left"/></svg></button>
     <select class="form-select fld fld-page"><option>Page 1</option></select>
     <button class="btn square-btn d-flex align-items-center justify-content-center" type="button" aria-label="Next"><svg width="12" height="12"><use href="#i-right"/></svg></button>
    </div>
   </div>
  </main>
 </div>
</div>
</body>
</html>
